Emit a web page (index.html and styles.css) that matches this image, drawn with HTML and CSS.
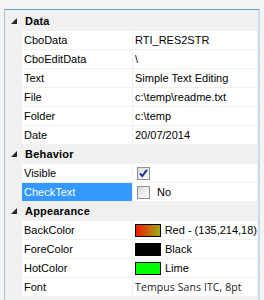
FILE: index.html
```html
<!DOCTYPE html>
<html lang="en">
<head>
    <meta charset="UTF-8">
    <title>Property Grid</title>
    <link rel="stylesheet" href="styles.css">
</head>
<body>
<div class="property-grid">
    <!-- Data -->
    <div class="category">
        <span class="toggle"></span>
        <span class="category-name">Data</span>
    </div>
    <div class="row"><span class="margin"></span><span class="name">CboData</span><span class="value">RTI_RES2STR</span></div>
    <div class="row"><span class="margin"></span><span class="name">CboEditData</span><span class="value">\</span></div>
    <div class="row"><span class="margin"></span><span class="name">Text</span><span class="value">Simple Text Editing</span></div>
    <div class="row"><span class="margin"></span><span class="name">File</span><span class="value">c:\temp\readme.txt</span></div>
    <div class="row"><span class="margin"></span><span class="name">Folder</span><span class="value">c:\temp</span></div>
    <div class="row"><span class="margin"></span><span class="name">Date</span><span class="value">20/07/2014</span></div>

    <!-- Behavior -->
    <div class="category">
        <span class="toggle"></span>
        <span class="category-name">Behavior</span>
    </div>
    <div class="row">
        <span class="margin"></span><span class="name">Visible</span>
        <span class="value"><span class="checkbox checked">
            <svg width="11" height="11" viewBox="0 0 11 11"><path d="M2 5.5 L4.3 8 L9 1.8" fill="none" stroke="#1c2f8c" stroke-width="2"/></svg>
        </span></span>
    </div>
    <div class="row selected">
        <span class="margin"></span><span class="name">CheckText</span>
        <span class="value"><span class="checkbox"></span><span class="check-label">No</span></span>
    </div>

    <!-- Appearance -->
    <div class="category">
        <span class="toggle"></span>
        <span class="category-name">Appearance</span>
    </div>
    <div class="row">
        <span class="margin"></span><span class="name">BackColor</span>
        <span class="value"><span class="swatch swatch-gradient"></span>Red - (135,214,18)</span>
    </div>
    <div class="row">
        <span class="margin"></span><span class="name">ForeColor</span>
        <span class="value"><span class="swatch swatch-black"></span>Black</span>
    </div>
    <div class="row">
        <span class="margin"></span><span class="name">HotColor</span>
        <span class="value"><span class="swatch swatch-lime"></span>Lime</span>
    </div>
    <div class="row">
        <span class="margin"></span><span class="name">Font</span>
        <span class="value font-value">Tempus Sans ITC, 8pt</span>
    </div>
</div>
</body>
</html>
```

FILE: styles.css
```css
* {
    margin: 0;
    padding: 0;
    box-sizing: border-box;
}

body {
    font-family: "Liberation Sans", Arial, sans-serif;
    font-size: 11px;
    color: #000;
    background-color: #f4f4f4;
    overflow: hidden;
}

.property-grid {
    margin: 9px 0 0 4px;
    width: 256px;
    height: 300px;
    padding-top: 2px;
    background-color: #f0f0f0;
    border-top: 1px solid #6a9fcf;
    border-left: 1px solid #a9c2da;
    border-right: 2px solid #c6dcee;
}

/* Category header rows */
.category {
    display: flex;
    align-items: center;
    height: 19px;
    padding-bottom: 1px;
}

.toggle {
    width: 17px;
    height: 18px;
    position: relative;
}

/* expanded glyph: small filled triangle pointing bottom-right */
.toggle::after {
    content: "";
    position: absolute;
    left: 6px;
    top: 6px;
    width: 0;
    height: 0;
    border-left: 6px solid transparent;
    border-bottom: 6px solid #262626;
}

.category-name {
    font-weight: bold;
    padding-left: 3px;
    letter-spacing: 0.2px;
}

/* Property rows */
.row {
    display: flex;
    height: 19px;
}

.margin {
    width: 17px;
    flex-shrink: 0;
}

.name,
.value {
    height: 18px;
    line-height: 18px;
    background-color: #fff;
    white-space: nowrap;
    overflow: hidden;
}

.name {
    width: 110px;
    padding-left: 2px;
    margin-right: 1px;
    color: #000;
}

.value {
    flex: 1;
    margin-right: 1px;
    padding-left: 2px;
    display: flex;
    align-items: center;
}

.row.selected .name {
    background-color: #3399ff;
    color: #fff;
}

/* Checkboxes */
.checkbox {
    width: 13px;
    height: 13px;
    margin-left: 2px;
    border: 1px solid #8e8f8f;
    background: linear-gradient(135deg, #dcdcdc, #fbfbfb);
    display: flex;
    align-items: center;
    justify-content: center;
}

.check-label {
    margin-left: 7px;
}

/* Colour swatches */
.swatch {
    width: 26px;
    height: 13px;
    margin-right: 4px;
    border: 1px solid #000;
}

.swatch-gradient {
    background: linear-gradient(90deg, #f01800, #87d612 130%);
}

.swatch-black {
    background-color: #000;
}

.swatch-lime {
    background-color: #00ff00;
}

.font-value {
    font-family: "Open Sans", sans-serif;
    font-size: 10.5px;
    letter-spacing: 0.1px;
    color: #222;
}
```
